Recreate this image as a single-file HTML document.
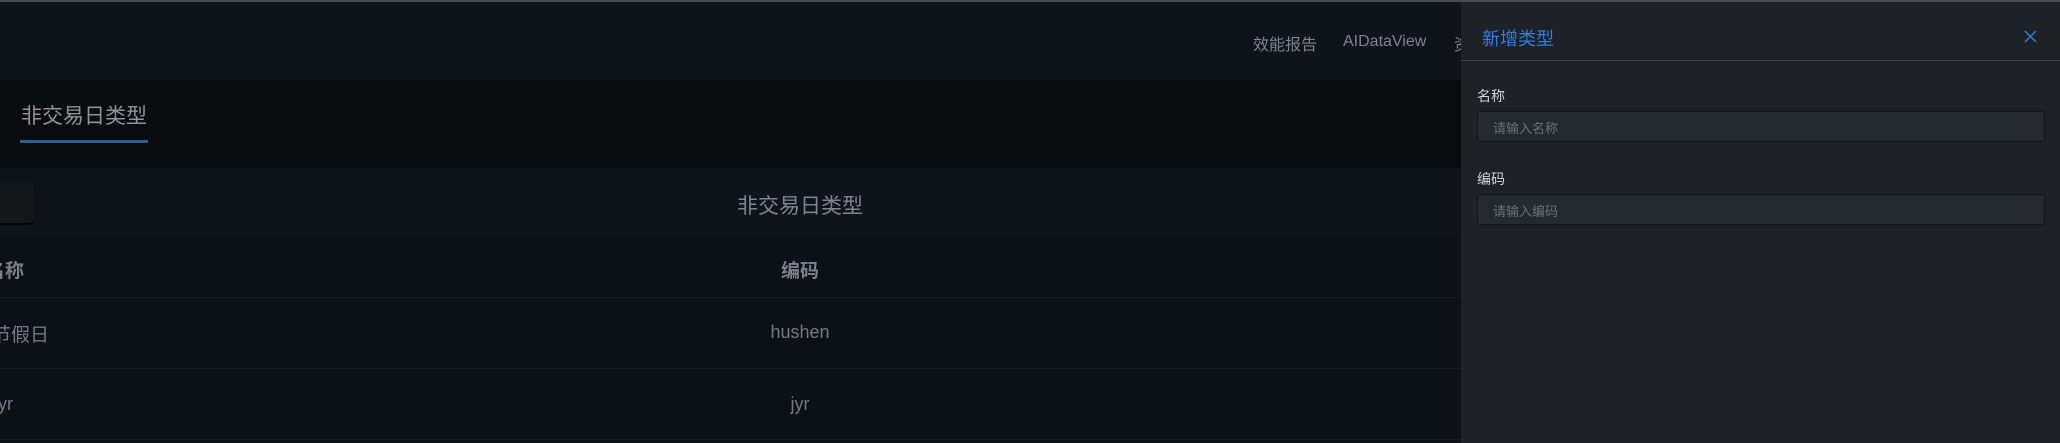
<!DOCTYPE html>
<html><head><meta charset="utf-8"><style>
*{margin:0;padding:0;box-sizing:border-box}
body{width:2060px;height:443px;overflow:hidden;background:#0c1017;font-family:"Liberation Sans","Noto Sans CJK SC",sans-serif;position:relative}
.a{position:absolute}
</style></head><body>
<div class="a" style="left:0;top:0;width:2060px;height:2px;background:#4a4c50"></div>
<div class="a" style="left:0;top:2px;width:1461px;height:78px;background:#0f131a"></div>
<div class="a" style="left:1253px;top:31px;font-size:16px;color:#7d838c">效能报告</div>
<div class="a" style="left:1343px;top:33px;font-size:16px;color:#7d838c">AIDataView</div>
<div class="a" style="left:1454px;top:31px;font-size:16px;color:#7d838c">资</div>
<div class="a" style="left:0;top:80px;width:1461px;height:88px;background:#090b0f"></div>
<div class="a" style="left:21px;top:100px;font-size:21px;color:#8e949c">非交易日类型</div>
<div class="a" style="left:20px;top:140px;width:128px;height:3px;background:#2b5f99"></div>
<div class="a" style="left:0;top:168px;width:1461px;height:66px;background:#0f141b"></div>
<div class="a" style="left:-10px;top:183px;width:44px;height:40px;background:#161718;border-radius:5px;box-shadow:0 2px 0 #050505"></div>
<div class="a" style="left:700px;top:190px;width:200px;text-align:center;font-size:21px;color:#7f858d">非交易日类型</div>
<div class="a" style="left:0;top:256px;font-size:19px;font-weight:bold;color:#7a8089;margin-left:-14px">名称</div>
<div class="a" style="left:700px;top:256px;width:200px;text-align:center;font-size:19px;font-weight:bold;color:#7a8089">编码</div>
<div class="a" style="left:0;top:297px;width:1461px;height:1px;background:#181c22"></div>
<div class="a" style="left:0;top:320px;font-size:19px;color:#747a82;margin-left:-8px">节假日</div>
<div class="a" style="left:700px;top:322px;width:200px;text-align:center;font-size:18px;color:#747a82">hushen</div>
<div class="a" style="left:0;top:368px;width:1461px;height:1px;background:#181c22"></div>
<div class="a" style="left:0;top:394px;font-size:18px;color:#747a82;margin-left:-6px">jyr</div>
<div class="a" style="left:700px;top:394px;width:200px;text-align:center;font-size:18px;color:#747a82">jyr</div>
<div class="a" style="left:0;top:439px;width:1461px;height:1px;background:#181c22"></div>
<div class="a" style="left:1461px;top:2px;width:599px;height:441px;background:#1e2126"></div>
<div class="a" style="left:1461px;top:60px;width:599px;height:1px;background:#3d4046"></div>
<div class="a" style="left:1482px;top:25px;font-size:18px;color:#2a80e6">新增类型</div>
<svg class="a" style="left:2024px;top:30px" width="13" height="13" viewBox="0 0 13 13"><path d="M1 1L12 12M12 1L1 12" stroke="#2a80e6" stroke-width="1.5"/></svg>
<div class="a" style="left:1477px;top:86px;font-size:14px;color:#d0d3d7">名称</div>
<div class="a" style="left:1477px;top:111px;width:568px;height:31px;background:#252a31;border:1px solid #111418;border-radius:3px;font-size:13px;color:#6c7178;padding:6px 0 0 15px">请输入名称</div>
<div class="a" style="left:1477px;top:169px;font-size:14px;color:#d0d3d7">编码</div>
<div class="a" style="left:1477px;top:194px;width:568px;height:31px;background:#252a31;border:1px solid #111418;border-radius:3px;font-size:13px;color:#6c7178;padding:6px 0 0 15px">请输入编码</div>
</body></html>
